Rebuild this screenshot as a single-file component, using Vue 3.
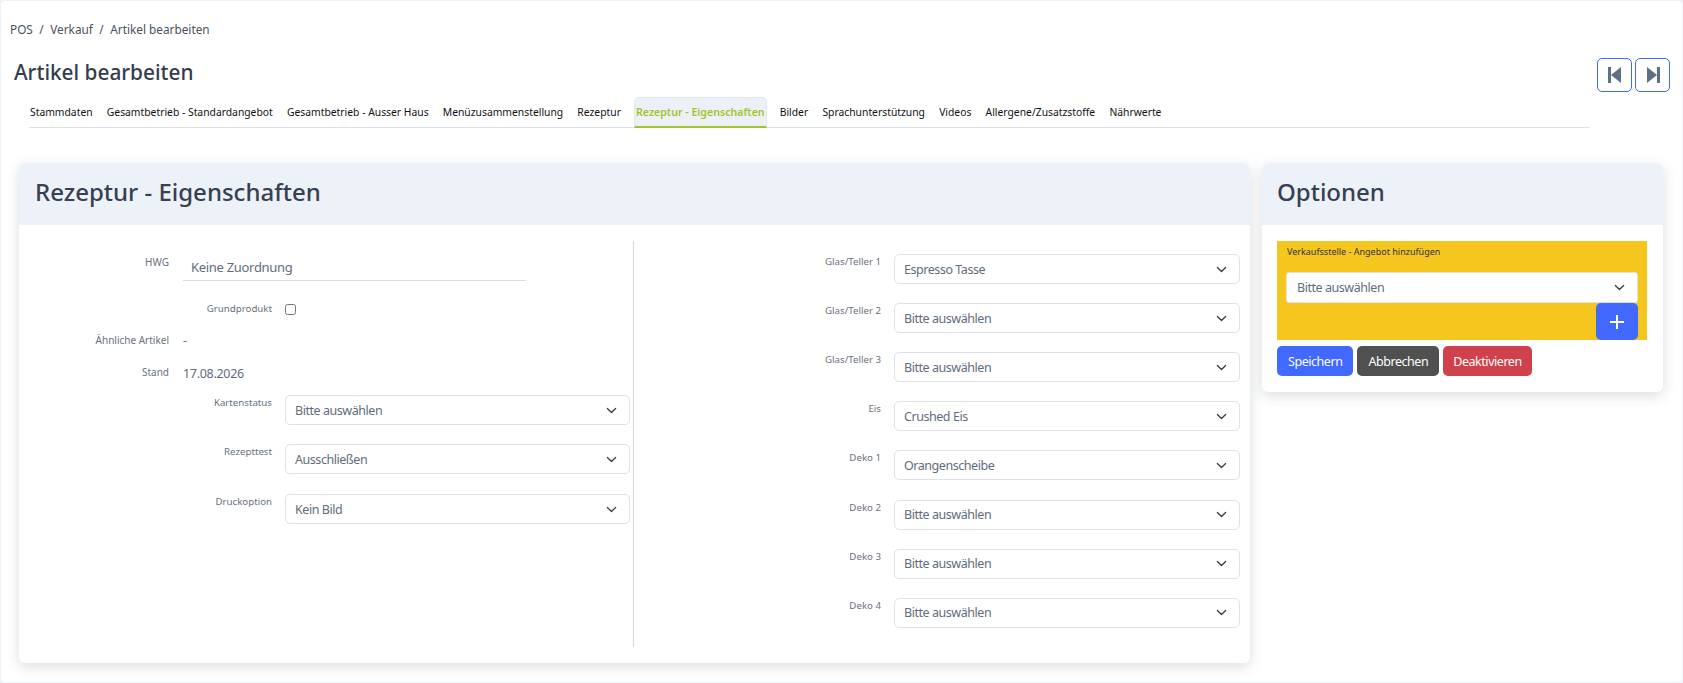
<template>
  <div class="page">
    <nav class="crumbs">
      <span>POS</span><span class="sep">/</span><span>Verkauf</span><span class="sep">/</span><span>Artikel bearbeiten</span>
    </nav>

    <div class="title-row">
      <h1>Artikel bearbeiten</h1>
      <div class="pager">
        <button class="pager-btn">
          <svg width="20" height="18" viewBox="0 0 20 18"><path d="M3 1h3v16H3zM6 9l10-8v16z" fill="#5f6f86" /></svg>
        </button>
        <button class="pager-btn">
          <svg width="20" height="18" viewBox="0 0 20 18"><path d="M14 1h3v16h-3zM14 9L4 1v16z" fill="#5f6f86" /></svg>
        </button>
      </div>
    </div>

    <div class="tabs">
      <a v-for="t in tabs" :key="t" class="tab" :class="{ active: t === activeTab }">{{ t }}</a>
    </div>

    <div class="cards">
      <section class="card main-card">
        <header class="card-head"><h2>Rezeptur - Eigenschaften</h2></header>
        <div class="card-body">
          <div class="col left-col">
            <div class="info hwg">
              <label>HWG</label>
              <div class="hwg-value">Keine Zuordnung</div>
            </div>
            <div class="field check-row">
              <label>Grundprodukt</label>
              <input type="checkbox" />
            </div>
            <div class="info similar">
              <label>Ähnliche Artikel</label>
              <span class="dash">-</span>
            </div>
            <div class="info stand">
              <label>Stand</label>
              <span class="value">17.08.2026</span>
            </div>
            <div v-for="f in leftFields" :key="f.label" class="field">
              <label>{{ f.label }}</label>
              <div class="select">
                <span>{{ f.value }}</span>
                <svg width="11" height="11" viewBox="0 0 16 16"><path d="M2 5l6 6 6-6" fill="none" stroke="#343a40" stroke-width="1.8" stroke-linecap="round" stroke-linejoin="round" /></svg>
              </div>
            </div>
          </div>
          <div class="col right-col">
            <div v-for="f in rightFields" :key="f.label" class="field">
              <label>{{ f.label }}</label>
              <div class="select">
                <span>{{ f.value }}</span>
                <svg width="11" height="11" viewBox="0 0 16 16"><path d="M2 5l6 6 6-6" fill="none" stroke="#343a40" stroke-width="1.8" stroke-linecap="round" stroke-linejoin="round" /></svg>
              </div>
            </div>
          </div>
        </div>
      </section>

      <section class="card side-card">
        <header class="card-head side-head"><h2>Optionen</h2></header>
        <div class="side-body">
          <div class="offer">
            <div class="offer-label">Verkaufsstelle - Angebot hinzufügen</div>
            <div class="select offer-select">
              <span>Bitte auswählen</span>
              <svg width="11" height="11" viewBox="0 0 16 16"><path d="M2 5l6 6 6-6" fill="none" stroke="#343a40" stroke-width="1.8" stroke-linecap="round" stroke-linejoin="round" /></svg>
            </div>
            <div class="offer-actions">
              <button class="add-btn">
                <svg width="14" height="14" viewBox="0 0 14 14"><path d="M7 0v14M0 7h14" stroke="#fff" stroke-width="2" /></svg>
              </button>
            </div>
          </div>
          <div class="actions">
            <button class="btn blue">Speichern</button>
            <button class="btn dark">Abbrechen</button>
            <button class="btn red">Deaktivieren</button>
          </div>
        </div>
      </section>
    </div>
  </div>
</template>

<script setup>
const tabs = [
  'Stammdaten',
  'Gesamtbetrieb - Standardangebot',
  'Gesamtbetrieb - Ausser Haus',
  'Menüzusammenstellung',
  'Rezeptur',
  'Rezeptur - Eigenschaften',
  'Bilder',
  'Sprachunterstützung',
  'Videos',
  'Allergene/Zusatzstoffe',
  'Nährwerte'
]
const activeTab = 'Rezeptur - Eigenschaften'

const leftFields = [
  { label: 'Kartenstatus', value: 'Bitte auswählen' },
  { label: 'Rezepttest', value: 'Ausschließen' },
  { label: 'Druckoption', value: 'Kein Bild' }
]

const rightFields = [
  { label: 'Glas/Teller 1', value: 'Espresso Tasse' },
  { label: 'Glas/Teller 2', value: 'Bitte auswählen' },
  { label: 'Glas/Teller 3', value: 'Bitte auswählen' },
  { label: 'Eis', value: 'Crushed Eis' },
  { label: 'Deko 1', value: 'Orangenscheibe' },
  { label: 'Deko 2', value: 'Bitte auswählen' },
  { label: 'Deko 3', value: 'Bitte auswählen' },
  { label: 'Deko 4', value: 'Bitte auswählen' }
]
</script>

<style>
html,
body {
  margin: 0;
  background: #eef1f8;
}
</style>

<style scoped>
.page {
  box-sizing: border-box;
  height: 681px;
  margin: 1px 1px 0 1px;
  background: #fff;
  border-radius: 4px;
  font-family: "Noto Sans", sans-serif;
  overflow: hidden;
}

.crumbs {
  display: flex;
  padding: 20px 0 0 9px;
  font-size: 11.8px;
  line-height: 17px;
  color: #4a5160;
}

.sep {
  margin: 0 6.5px;
}

.title-row {
  display: flex;
  justify-content: space-between;
  padding: 18px 12px 0 13px;
  height: 40px;
}

h1 {
  margin: 0;
  font-size: 20.8px;
  line-height: 32px;
  font-weight: 500;
  color: #333c4d;
}

.pager {
  display: flex;
  gap: 3px;
  margin-top: 2px;
  height: 34px;
}

.pager-btn {
  width: 35px;
  height: 34px;
  padding: 0;
  display: flex;
  align-items: center;
  justify-content: center;
  background: #fff;
  border: 1px solid #4169ff;
  border-radius: 5px;
}

.tabs {
  display: flex;
  margin: 0 92px 0 28px;
  height: 31px;
  border-bottom: 1px solid #dfe2e8;
}

.tab {
  padding: 0 7.1px;
  line-height: 32px;
  font-size: 10.33px;
  color: #111;
  white-space: nowrap;
}

.tab:first-child {
  padding-left: 1px;
}

.tab.active {
  padding: 0 1px;
  margin: 1px 6px 0;
  background: #edf0f7;
  color: #a1c52c;
  font-weight: 600;
  font-size: 10.6px;
  line-height: 29px;
  border-radius: 5px 5px 0 0;
  border: 1px solid #e3e6ee;
  border-bottom: 2px solid #a1c52c;
  box-sizing: border-box;
  height: 31px;
}

.cards {
  display: flex;
  gap: 12px;
  align-items: flex-start;
  padding: 35px 19px 0 18px;
}

.card {
  background: #fff;
  border-radius: 6px;
  box-shadow: 0 4px 14px rgba(40, 50, 70, 0.16);
  overflow: hidden;
}

.main-card {
  width: 1231px;
  height: 500px;
}

.side-card {
  width: 401px;
}

.card-head {
  height: 62px;
  background: #edf1f8;
  padding-left: 16px;
}

.side-head {
  padding-left: 15px;
}

h2 {
  margin: 0;
  font-size: 24px;
  line-height: 58px;
  font-weight: 500;
  color: #364051;
}

.card-body {
  display: flex;
  padding: 16px 10px 0 0;
  height: 406px;
}

.col {
  box-sizing: border-box;
}

.left-col {
  width: 615px;
  padding-right: 3px;
  border-right: 1px solid #d6d9df;
}

.right-col {
  flex: 1;
  padding-top: 13px;
}

.field {
  display: flex;
  align-items: flex-start;
  margin-bottom: 19.12px;
}

.left-col .field:last-child {
  margin-top: 20px;
}

label {
  font-size: 9.7px;
  line-height: 14px;
  color: #697180;
  text-align: right;
}

.left-col .field label {
  width: 253px;
  margin-right: 13px;
  padding-top: 1px;
}

.right-col .field label {
  width: 247px;
  margin-right: 13px;
  padding-top: 1px;
}

.select {
  flex: 1;
  box-sizing: border-box;
  height: 30px;
  display: flex;
  align-items: center;
  justify-content: space-between;
  padding: 0 12px 0 9px;
  background: #fff;
  border: 1px solid #dfe2ea;
  border-radius: 5px;
  font-size: 12.5px;
  letter-spacing: -0.45px;
  color: #626c7c;
}

.info {
  display: flex;
  align-items: flex-start;
}

.info label {
  width: 150px;
  margin-right: 14px;
  font-size: 10px;
}

.hwg {
  height: 40px;
}

.hwg label {
  margin-top: 14px;
}

.hwg-value {
  box-sizing: border-box;
  width: 343px;
  height: 40px;
  padding: 18px 0 0 8px;
  font-size: 13px;
  line-height: 17px;
  letter-spacing: -0.3px;
  color: #626c7c;
  border-bottom: 1px solid #d9dbe0;
}

.check-row {
  margin: 21px 0 0;
  height: 14px;
  align-items: center;
}

.left-col .check-row label {
  padding-top: 0;
}

.check-row input {
  margin: 0;
  width: 11px;
  height: 11px;
}

.similar {
  margin-top: 17px;
}

.dash {
  font-size: 12px;
  line-height: 16px;
  color: #626c7c;
}

.stand {
  margin-top: 16px;
  margin-bottom: 13px;
}

.value {
  font-size: 12.5px;
  line-height: 17px;
  letter-spacing: -0.3px;
  color: #626c7c;
}

.side-body {
  padding: 16px 16px 16px 15px;
}

.offer {
  background: #f5c61e;
  height: 99px;
  padding: 0 9px;
}

.offer-label {
  font-size: 9px;
  line-height: 13px;
  padding: 4px 0 0 1px;
  height: 31px;
  box-sizing: border-box;
  color: #2e3340;
}

.offer-select {
  flex: none;
  height: 31px;
  border-radius: 3px;
  padding-left: 10px;
}

.offer-actions {
  display: flex;
  justify-content: flex-end;
}

.add-btn {
  width: 42px;
  height: 37px;
  padding: 0;
  border: none;
  border-radius: 5px;
  background: #4169ff;
  display: flex;
  align-items: center;
  justify-content: center;
}

.actions {
  display: flex;
  gap: 4px;
  margin-top: 6px;
}

.btn {
  height: 30px;
  padding: 0 11px;
  border: none;
  border-radius: 5px;
  font-family: inherit;
  font-size: 12.5px;
  letter-spacing: -0.45px;
  color: #fff;
}

.red {
  padding: 0 10px;
}

.blue {
  background: #4169ff;
}

.dark {
  background: #505050;
}

.red {
  background: #cf414b;
}
</style>
